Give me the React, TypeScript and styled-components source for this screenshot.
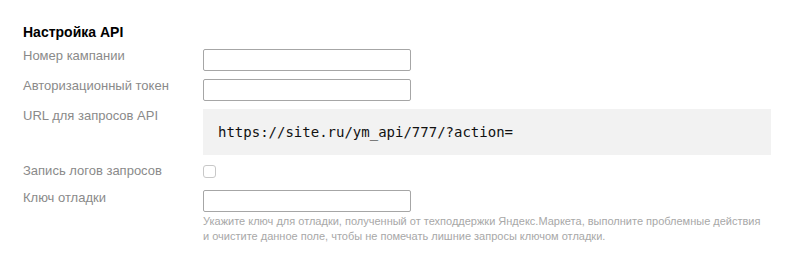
import React from "react";
import styled, { createGlobalStyle } from "styled-components";

const Global = createGlobalStyle`
  html, body { margin: 0; padding: 0; background: #fff; }
  body { font-family: "Liberation Sans", Arial, sans-serif; }
`;

const Panel = styled.div`
  padding: 24px 15px 20px 23px;
  display: flex;
  flex-direction: column;
  width: 748px;
`;

const Title = styled.h3`
  margin: 0 0 8px;
  font-size: 14px;
  line-height: 16px;
  font-weight: bold;
  color: #000;
`;

const Row = styled.div<{ $gap?: number }>`
  display: flex;
  align-items: flex-start;
  margin-bottom: ${(p) => p.$gap ?? 7}px;
`;

const Label = styled.div`
  width: 180px;
  flex: none;
  font-size: 13px;
  line-height: 15px;
  color: #8a8a8a;
`;

const Field = styled.div<{ $offset?: number }>`
  display: flex;
  flex-direction: column;
  flex: 1;
  padding-top: ${(p) => p.$offset ?? 1}px;
`;

const Input = styled.input`
  box-sizing: border-box;
  width: 208px;
  height: 22px;
  margin: 0;
  border: 1px solid #a6a6a6;
  border-radius: 2px;
  background: #fff;
  font: 13px "Liberation Sans", Arial, sans-serif;
  padding: 0 4px;
`;

const Code = styled.div`
  background: #f2f2f2;
  padding: 14px 15px;
  font-family: "DejaVu Sans Mono", "Liberation Mono", monospace;
  font-size: 14px;
  line-height: 18px;
  color: #111;
  width: 538px;
`;

const Check = styled.span`
  display: block;
  width: 11px;
  height: 11px;
  border: 1px solid #c8c8c8;
  border-radius: 3px;
  background: #fff;
`;

const Help = styled.div`
  margin-top: 2px;
  font-size: 11px;
  line-height: 15px;
  color: #a8a8a8;
  max-width: 562px;
`;

export default function App() {
  return (
    <>
      <Global />
      <Panel>
        <Title>Настройка API</Title>
        <Row>
          <Label>Номер кампании</Label>
          <Field>
            <Input type="text" />
          </Field>
        </Row>
        <Row>
          <Label>Авторизационный токен</Label>
          <Field>
            <Input type="text" />
          </Field>
        </Row>
        <Row $gap={8}>
          <Label>URL для запросов API</Label>
          <Field>
            <Code>https://site.ru/ym_api/777/?action=</Code>
          </Field>
        </Row>
        <Row $gap={12}>
          <Label>Запись логов запросов</Label>
          <Field $offset={2}>
            <Check />
          </Field>
        </Row>
        <Row $gap={0}>
          <Label>Ключ отладки</Label>
          <Field $offset={0}>
            <Input type="text" />
            <Help>
              Укажите ключ для отладки, полученный от техподдержки Яндекс.Маркета, выполните проблемные действия
              и очистите данное поле, чтобы не помечать лишние запросы ключом отладки.
            </Help>
          </Field>
        </Row>
      </Panel>
    </>
  );
}
